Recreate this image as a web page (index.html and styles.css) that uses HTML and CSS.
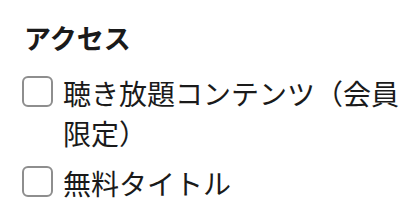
FILE: index.html
```html
<!DOCTYPE html>
<html lang="ja">
  <head>
    <meta charset="UTF-8" />
    <meta name="viewport" content="width=device-width, initial-scale=1.0" />
    <title>アクセス</title>
    <link rel="stylesheet" href="styles.css">
  </head>
  <body>
    <div class="filter">
      <h3 class="filter-title">アクセス</h3>
      <label class="option">
        <span class="box"></span>
        <span class="option-text">聴き放題コンテンツ（会員限定）</span>
      </label>
      <label class="option">
        <span class="box"></span>
        <span class="option-text">無料タイトル</span>
      </label>
    </div>
  </body>
</html>
```

FILE: styles.css
```css
body {
  margin: 0;
  background: #fff;
  color: #1a1a1a;
  font-family: "Noto Sans CJK JP", "Noto Sans", sans-serif;
}
.filter {
  padding: 22px 12px 0 22px;
}
.filter-title {
  margin: 0 0 19px;
  padding-left: 2px;
  font-size: 27px;
  font-weight: bold;
  line-height: 32px;
}
.option {
  display: flex;
  align-items: flex-start;
  gap: 10px;
  margin-bottom: 10px;
}
.box {
  flex: none;
  width: 27px;
  height: 27px;
  margin-top: 3px;
  border: 2px solid #8e8e8e;
  border-radius: 6px;
}
.option-text {
  font-size: 28px;
  line-height: 40px;
}
```
